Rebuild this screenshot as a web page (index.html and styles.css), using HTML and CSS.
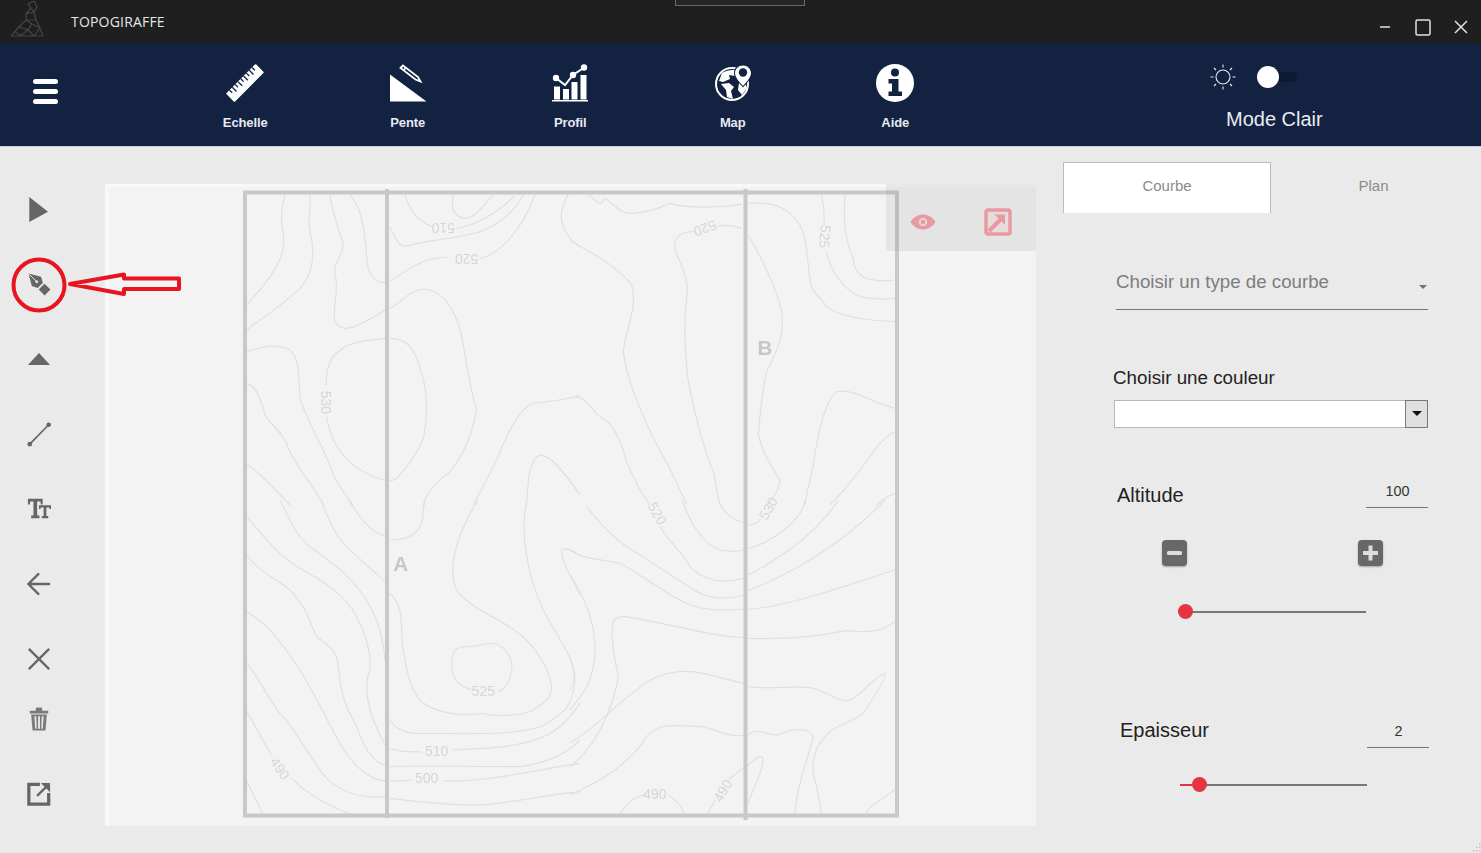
FILE: index.html
```html
<!DOCTYPE html>
<html lang="fr">
<head>
<meta charset="utf-8">
<title>TOPOGIRAFFE</title>
<link rel="stylesheet" href="styles.css">
</head>
<body>
<div class="app">
  <header class="titlebar">
    <svg class="logo" viewBox="0 0 36 38" aria-hidden="true">
      <path class="logo-line" d="M24 1 L18 4 L21 8 L16 14 L16 20 L9 27 L1 36 M24 1 L27 7 L24 12 L26 20 L30 28 L33 36 M16 20 L22 24 L18 30 L24 36 M9 27 L18 30 L10 36 M22 24 L30 28 L24 36 M1 36 H33 M21 8 L24 12 L16 14 M16 14 L24 12 M16 20 L26 20 M5 32 L12 36"/>
    </svg>
    <span class="app-name">TOPOGIRAFFE</span>
    <div class="drag-tab"></div>
    <div class="win-controls">
      <svg class="win-ico win-min" viewBox="0 0 11 2"><path d="M0 1H10"/></svg>
      <svg class="win-ico win-max" viewBox="0 0 16 17"><rect x="1" y="1" width="14" height="15" rx="1.5"/></svg>
      <svg class="win-ico win-close" viewBox="0 0 14 14"><path d="M1 1L13 13M13 1L1 13"/></svg>
    </div>
  </header>

  <nav class="navbar">
    <svg class="burger" viewBox="0 0 25 25" aria-hidden="true">
      <rect x="0" y="0" width="25" height="5" rx="2.5"/>
      <rect x="0" y="10" width="25" height="5" rx="2.5"/>
      <rect x="0" y="20" width="25" height="5" rx="2.5"/>
    </svg>
    <div class="nav-items">
      <div class="nav-item">
        <svg class="nav-ico" viewBox="0 0 38 38" aria-hidden="true">
          <g transform="rotate(-45 19 19)">
            <rect x="-2" y="13" width="42" height="12" rx="1" class="ico-fill"/>
            <path class="ico-cut" d="M3 13v4M7 13v6M11 13v4M15 13v6M19 13v4M23 13v6M27 13v4M31 13v6M35 13v4"/>
          </g>
        </svg>
        <span>Echelle</span>
      </div>
      <div class="nav-item">
        <svg class="nav-ico" viewBox="0 0 38 38" aria-hidden="true">
          <path class="ico-fill" d="M1 10.5V37.5H37.5Z"/>
          <path class="ico-outline" d="M11.5 4L14 1.5L29 13L31.500 17.500L26.500 15.500Z"/>
          <path class="ico-outline" d="M14.500 6.500L16.500 4"/>
        </svg>
        <span>Pente</span>
      </div>
      <div class="nav-item">
        <svg class="nav-ico" viewBox="0 0 38 38" aria-hidden="true">
          <path class="ico-fill" d="M3 22.500h6v13h-6zM12 25h6v10.500h-6zM20.500 18h6v17.500h-6zM29.500 11h6v24.500h-6zM1 36h36v1.500H1z"/>
          <path class="ico-stroke" d="M5 14L14 21L22 11L34 3"/>
          <circle class="ico-fill" cx="5" cy="14" r="3.200"/>
          <circle class="ico-fill" cx="22" cy="11" r="3.200"/>
          <circle class="ico-fill" cx="33" cy="3.500" r="3.200"/>
        </svg>
        <span>Profil</span>
      </div>
      <div class="nav-item">
        <svg class="nav-ico" viewBox="0 0 38 38" aria-hidden="true">
          <circle class="ico-outline-thick" cx="18" cy="20" r="16"/>
          <path class="ico-fill" d="M8 9C13 6 20 5 23 7L21 12L15 11L16 15L9 18L5 17ZM7 20L15 19L20 23L17 27L19 35L13 33L12 26ZM25 19L31 19L33 24L28 31L24 26Z"/>
          <path class="ico-navy" d="M29 0.500C23.500 0.500 20 4.500 20 9C20 14 26 20 29 23.500C32 20 38 14 38 9C38 4.500 34.500 0.500 29 0.500Z"/>
          <path class="ico-fill" d="M29 1.500C24.500 1.500 21 5 21 9C21 13.500 26 18.500 29 22C32 18.500 37 13.500 37 9C37 5 33.500 1.500 29 1.500Z"/>
          <circle class="ico-navy" cx="29" cy="8.500" r="4.200"/>
        </svg>
        <span>Map</span>
      </div>
      <div class="nav-item">
        <svg class="nav-ico" viewBox="0 0 38 38" aria-hidden="true">
          <circle class="ico-fill" cx="19" cy="19" r="19"/>
          <circle class="ico-navy" cx="19" cy="8.500" r="4"/>
          <path class="ico-navy" d="M12.500 15H22.500V27.500H26V32H12.500V27.500H16V19.500H12.500Z"/>
        </svg>
        <span>Aide</span>
      </div>
    </div>
    <div class="mode">
      <div class="mode-switch">
        <svg class="sun" viewBox="0 0 26 26" aria-hidden="true">
          <circle cx="13" cy="13" r="7"/>
          <path d="M13 0.500V3.500M13 22.500V25.500M0.500 13H3.500M22.500 13H25.500M4 4L6 6M20 20L22 22M22 4L20 6M6 20L4 22"/>
        </svg>
        <div class="toggle"><div class="knob"></div></div>
      </div>
      <div class="mode-label">Mode Clair</div>
    </div>
  </nav>

  <main class="workspace">
    <aside class="tools">
      <svg class="tool" viewBox="0 0 24 26"><path class="t-fill" d="M1.500 0L21.800 16L1.500 27Z"/></svg>
      <svg class="tool" viewBox="0 0 24 26">
        <g transform="rotate(-45 12 13)">
          <path class="t-fill" d="M12 -3L19 9L16 15H8L5 9ZM7.500 17H16.500V26H7.500Z"/>
          <path class="t-cut" d="M12 -2V9"/>
          <circle class="t-cut-fill" cx="12" cy="9.500" r="1.500"/>
        </g>
      </svg>
      <svg class="tool" viewBox="0 0 24 26"><path class="t-fill" d="M0 19.500L12 6.500L24 19.500Z"/></svg>
      <svg class="tool" viewBox="0 0 24 26">
        <path class="t-line" d="M2 24L22.500 3"/>
        <circle class="t-fill" cx="2" cy="24" r="2.500"/>
        <circle class="t-fill" cx="22.500" cy="3" r="2.500"/>
      </svg>
      <svg class="tool" viewBox="0 0 26 26">
        <path class="t-fill" d="M1 2H17V8H15L14.500 5H11V20H13.500V23H4.500V20H7V5H3.500L3 8H1Z"/>
        <path class="t-fill" d="M13 9H26V13H24.500L24 11.500H21V20.500H23V23H16V20.500H18V11.500H15L14.500 13H13Z"/>
      </svg>
      <svg class="tool" viewBox="0 0 26 26"><path class="t-line t-thick" d="M25 13H2M13 1.500L1.500 13L13 24.500"/></svg>
      <svg class="tool" viewBox="0 0 26 26"><path class="t-line t-thick" d="M2 2L24 24M24 2L2 24"/></svg>
      <svg class="tool tool-trash" viewBox="0 0 24 26">
        <path class="t-soft" d="M2 4H8.500V2C8.500 1 9.500 .5 10.500 .5H13.500C14.500 .5 15.500 1 15.500 2V4H22V7H2ZM3.500 8H20.500L19 25.500H5ZM7 10L8 23.500H9.500L9 10ZM11 10V23.500H13V10ZM15 10L14.500 23.500H16L17 10Z"/>
      </svg>
      <svg class="tool" viewBox="0 0 26 26">
        <path class="t-line t-heavy" d="M14 2.500H2V24H23.500V12"/>
        <path class="t-line t-thick" d="M11 15L21 5"/>
        <path class="t-fill" d="M15 1H25V11Z"/>
      </svg>
    </aside>

    <section class="canvas">
      <svg class="map" viewBox="105 184 931 642" aria-label="Carte topographique">
        <g transform="translate(100 175) scale(.3333)" class="contours">
          <path d="M555 60C545 100 540 130 550 180C558 230 540 280 440 390"/>
          <path d="M630 60C635 100 620 130 630 170C645 230 645 290 600 340C560 380 500 420 440 465"/>
          <path d="M690 60C695 110 720 170 730 210C725 250 700 260 705 300C720 340 695 400 705 440C725 475 760 465 855 405"/>
          <path d="M870 400C900 385 930 345 970 342C1030 345 1075 410 1090 510C1100 570 1110 640 1130 705C1120 760 1100 830 1050 890C1010 920 980 950 970 990"/>
          <path d="M750 60C780 90 795 150 800 250C805 300 825 325 855 322"/>
          <path d="M870 318C900 305 950 250 1040 246"/>
          <path d="M1140 250C1190 240 1260 180 1305 60"/>
          <path d="M870 155C890 200 900 220 925 212C980 195 1080 190 1140 170C1200 150 1250 100 1270 60"/>
          <path d="M915 60C930 110 960 140 995 155"/>
          <path d="M1070 160C1120 155 1200 110 1245 60"/>
          <path d="M1060 60C1050 110 1070 130 1100 130C1130 125 1150 90 1180 60"/>
          <path d="M1440 215C1400 190 1380 150 1385 110C1390 90 1395 70 1405 60"/>
          <path d="M440 530C480 515 540 505 570 525C600 550 595 610 600 670C620 740 680 830 700 900C720 940 740 965 760 990"/>
          <path d="M440 625C470 630 485 680 495 720C510 750 550 770 565 820C590 880 640 930 670 990"/>
          <path d="M440 868C480 890 530 950 570 990"/>
          <path d="M678 630C680 560 700 525 760 505C800 495 855 490 855 490"/>
          <path d="M870 490C920 490 945 520 960 580C985 650 985 720 970 790C950 840 920 880 890 910C875 920 870 915 870 915"/>
          <path d="M680 725C690 810 750 890 855 915"/>
          <path d="M1440 660C1400 675 1340 680 1300 685C1260 700 1230 760 1200 830C1170 900 1140 950 1120 990"/>
          <path d="M1440 960C1400 900 1350 840 1320 840C1290 850 1285 900 1280 990"/>
          <text class="map-num" transform="translate(1030 160) rotate(180)">510</text>
          <text class="map-num" transform="translate(1100 252) rotate(180)">520</text>
          <text class="map-num" transform="translate(677 682) rotate(90)">530</text>
        </g>
        <g transform="translate(570 175) scale(.3333)" class="contours">
          <path d="M0 195C50 230 130 260 185 330C205 390 165 470 160 530C170 610 200 680 250 790C290 860 320 920 350 990"/>
          <path d="M55 60C80 75 90 100 105 70C130 85 150 115 180 115C220 115 270 100 300 85C350 100 440 100 515 88"/>
          <path d="M535 85C600 80 650 90 690 150C715 200 710 260 720 310C720 345 740 360 760 380C770 410 840 435 975 440"/>
          <path d="M440 155C470 145 500 155 515 160"/>
          <path d="M535 180C570 240 620 340 635 410C645 480 620 530 590 590C575 650 570 720 565 780C580 850 620 890 630 920C625 950 610 970 590 990"/>
          <path d="M370 170C330 170 310 190 315 220C330 270 360 310 350 370C340 450 345 540 355 620C370 700 400 820 430 890C440 930 440 960 450 990"/>
          <path d="M755 60C760 90 765 120 762 150"/>
          <path d="M770 230C780 290 820 340 870 365C910 375 950 372 975 370"/>
          <path d="M825 60C820 130 825 200 850 250C850 300 890 325 975 315"/>
          <path d="M0 670C40 650 60 700 90 725C130 745 150 790 170 860C190 910 210 950 240 990"/>
          <path d="M975 700C900 680 850 640 800 650C770 670 745 760 730 870C720 920 710 950 705 990"/>
          <path d="M975 770C930 790 900 850 850 910C820 950 800 970 780 990"/>
          <path d="M975 955C950 965 930 980 920 990"/>
          <text class="map-num" transform="translate(405 160) rotate(160)">520</text>
          <text class="map-num" transform="translate(765 185) rotate(95)">525</text>
          <text class="map-letter" x="585" y="517">B</text>
        </g>
        <g transform="translate(100 500) scale(.3333)" class="contours">
          <path d="M540 0C570 60 590 110 630 140C700 190 770 240 810 320C840 370 850 420 855 480"/>
          <path d="M665 0C680 50 700 100 740 140C780 180 830 220 855 245"/>
          <path d="M745 0C780 50 810 100 855 108"/>
          <path d="M440 50C490 110 540 170 600 205C680 250 740 290 770 350C800 410 815 460 810 510C785 570 810 650 855 735"/>
          <path d="M440 165C470 210 520 230 570 270C620 320 630 370 650 410C690 440 710 450 715 500C720 560 730 610 770 680C790 740 820 790 855 795"/>
          <path d="M440 335C500 370 540 420 600 510C650 590 680 660 720 730C760 800 810 840 855 843"/>
          <path d="M440 490C470 520 500 590 540 640C600 700 640 800 690 845C740 885 800 895 855 890"/>
          <path d="M870 895C950 905 1050 915 1130 915C1200 915 1300 890 1440 875"/>
          <path d="M440 635C470 680 490 730 515 765"/>
          <path d="M575 835C620 880 690 920 760 945"/>
          <path d="M440 845C460 880 475 915 490 945"/>
          <path d="M870 120C930 120 970 100 970 30L975 0"/>
          <path d="M870 280C900 310 905 340 905 400C910 480 930 570 960 600C1000 640 1080 650 1150 640C1180 650 1260 650 1300 630C1340 600 1350 600 1355 560C1350 510 1310 440 1250 395C1190 350 1100 320 1070 270C1040 210 1070 100 1135 0"/>
          <path d="M1280 0C1260 100 1280 220 1330 330C1370 410 1425 470 1425 540C1420 620 1390 640 1340 670C1280 710 1100 700 950 700C910 700 880 680 870 660"/>
          <path d="M870 745C900 755 930 757 965 755"/>
          <path d="M1060 750C1150 745 1250 745 1330 710C1380 690 1420 640 1440 610"/>
          <path d="M870 800C960 795 1100 800 1260 800C1340 790 1400 760 1440 720"/>
          <path d="M870 843C890 843 920 843 935 840"/>
          <path d="M1030 842C1150 850 1300 810 1440 790"/>
          <path d="M1115 570C1080 560 1055 540 1055 490C1055 450 1070 440 1100 440C1140 440 1160 425 1190 432C1220 445 1240 480 1235 510C1230 550 1210 570 1195 575"/>
          <path d="M1385 150C1400 140 1420 155 1440 165M1385 150C1385 190 1420 240 1440 285"/>
          <text class="map-num" transform="translate(540 805) rotate(55)">490</text>
          <text class="map-num" x="1010" y="752">510</text>
          <text class="map-num" x="980" y="835">500</text>
          <text class="map-num" x="1150" y="573">525</text>
          <text class="map-letter" x="902" y="190">A</text>
        </g>
        <g transform="translate(570 500) scale(.3333)" class="contours">
          <path d="M0 150C40 180 110 180 150 190C210 220 280 280 360 315C420 335 480 330 520 328"/>
          <path d="M535 328C650 320 820 260 975 210"/>
          <path d="M50 20C90 70 130 120 210 165C280 210 340 250 390 280C440 300 490 295 520 285"/>
          <path d="M535 225C640 170 740 100 805 0"/>
          <path d="M535 272C690 210 830 120 945 0"/>
          <path d="M270 80C300 130 340 160 360 200C400 240 450 255 520 235"/>
          <path d="M335 0C360 60 390 130 450 150C480 155 505 155 520 150"/>
          <path d="M535 145C600 130 700 60 705 0"/>
          <path d="M445 0C460 40 490 60 520 68"/>
          <path d="M535 75C550 75 565 65 572 58"/>
          <path d="M0 225C50 300 90 400 70 500C60 560 30 590 0 630"/>
          <path d="M0 480C15 510 20 540 0 570"/>
          <path d="M130 370C130 355 150 345 180 352C300 370 420 410 520 412"/>
          <path d="M535 415C650 420 740 410 830 392C900 400 930 395 975 365"/>
          <path d="M130 370C120 400 130 460 145 530C130 620 80 740 0 800"/>
          <path d="M0 730C80 680 130 620 200 570C250 520 330 505 400 520C450 530 490 545 520 550"/>
          <path d="M535 560C600 570 680 555 730 565C770 575 810 610 840 600C870 590 900 540 945 520C950 530 920 580 880 640C850 665 810 670 780 695C740 730 725 770 730 820C740 860 750 900 755 945"/>
          <path d="M0 885C100 840 180 790 230 710C260 670 300 675 400 680C440 690 470 710 520 707"/>
          <path d="M535 705C560 680 590 705 620 705C660 690 710 675 730 710C720 760 680 850 675 945"/>
          <path d="M150 940C170 910 200 890 225 882"/>
          <path d="M295 885C320 900 335 920 345 945"/>
          <path d="M410 945C420 925 430 915 435 900"/>
          <path d="M475 840C500 815 530 800 560 775C580 760 585 780 570 820C555 860 540 890 535 910"/>
          <path d="M890 945C885 920 940 900 975 868"/>
          <text class="map-num" transform="translate(262 40) rotate(60)">520</text>
          <text class="map-num" transform="translate(595 25) rotate(-60)">530</text>
          <text class="map-num" x="255" y="882">490</text>
          <text class="map-num" transform="translate(458 872) rotate(-60)">490</text>
        </g>
        <rect class="frame" x="245" y="192.500" width="652" height="623"/>
        <path class="frame" d="M387 189V818M745.500 189V820"/>
      </svg>
      <div class="canvas-tools">
        <svg class="eye" viewBox="0 0 26 16" aria-hidden="true">
          <path d="M0.500 8C4 2.500 8.500 0.500 13 0.500C17.500 0.500 22 2.500 25.500 8C22 13.500 17.500 15.500 13 15.500C8.500 15.500 4 13.500 0.500 8Z"/>
          <circle class="eye-hole" cx="13" cy="8" r="4.200"/>
          <circle cx="13" cy="8" r="2.200"/>
        </svg>
        <svg class="resize" viewBox="0 0 28 28" aria-hidden="true">
          <rect class="resize-box" x="2" y="2" width="24" height="24" rx="2"/>
          <path d="M21 6.500V17L17.500 13.500L6.500 24.500L3.500 21.500L14.500 10.500L10.500 6.500Z"/>
        </svg>
      </div>
    </section>

    <aside class="panel">
      <div class="tabs">
        <div class="tab tab-active">Courbe</div>
        <div class="tab">Plan</div>
      </div>
      <div class="form">
        <div class="type-select">
          <span>Choisir un type de courbe</span>
          <span class="caret"></span>
        </div>
        <div class="color-label">Choisir une couleur</div>
        <div class="color-select">
          <div class="color-arrow"><span class="caret caret-dark"></span></div>
        </div>
        <div class="value-row">
          <span class="value-label">Altitude</span>
          <span class="value-box">100</span>
        </div>
        <div class="steppers">
          <svg class="stepper" viewBox="0 0 25 26"><rect x="5" y="11" width="15" height="4" rx="1.500"/></svg>
          <svg class="stepper" viewBox="0 0 25 26"><path d="M5 11H10.500V5.500H14.500V11H20V15H14.500V20.500H10.500V15H5Z"/></svg>
        </div>
        <div class="slider slider-alt">
          <div class="slider-track"></div>
          <div class="slider-thumb" style="left:0"></div>
        </div>
        <div class="value-row value-row-thick">
          <span class="value-label">Epaisseur</span>
          <span class="value-box">2</span>
        </div>
        <div class="slider slider-thick">
          <div class="slider-track"><div class="slider-fill" style="width:20px"></div></div>
          <div class="slider-thumb" style="left:12px"></div>
        </div>
      </div>
      <svg class="grip" viewBox="0 0 11 11" aria-hidden="true">
        <path d="M9 1h1.500v1.500H9zM6 4.500h1.500V6H6zM9 4.500h1.500V6H9zM3 8h1.500v1.500H3zM6 8h1.500v1.500H6zM9 8h1.500v1.500H9z"/>
      </svg>
    </aside>

    <svg class="annotation" viewBox="0 0 190 80" aria-hidden="true">
      <circle cx="39" cy="40" r="25.500"/>
      <path d="M70 39L124 29.500V33.500H179V44H124V49Z"/>
    </svg>
  </main>
</div>
</body>
</html>
```

FILE: styles.css
```css
* { box-sizing: border-box; }
html, body { margin: 0; height: 100%; overflow: hidden; }
body { font-family: "Liberation Sans", Arial, sans-serif; background: #eaeaea; }
.app { width: 1481px; height: 853px; display: flex; flex-direction: column; }

/* Title bar */
.titlebar { position: relative; height: 43px; background: #1f1f1f; display: flex; align-items: center; padding-left: 10px; flex: none; }
.logo { width: 36px; height: 38px; margin-top: -6px; filter: blur(.4px); }
.logo-line { fill: none; stroke: #454545; stroke-width: 1.200; }
.app-name { margin-left: 25px; margin-top: -1px; font-family: "Open Sans", sans-serif; font-size: 14px; letter-spacing: .19px; color: #e6e6e6; }
.drag-tab { position: absolute; left: 675px; top: -2px; width: 130px; height: 8px; background: #262626; border: 1px solid #6a6a6a; }
.win-controls { margin-left: auto; display: flex; align-items: center; height: 100%; padding-right: 13px; padding-top: 11px; }
.win-ico { display: block; fill: none; stroke: #e2e2e2; stroke-width: 1.500; }
.win-min { width: 11px; height: 2px; }
.win-max { width: 16px; height: 17px; margin-left: 24px; }
.win-close { width: 14px; height: 14px; margin-left: 23px; }

/* Navigation */
.navbar { height: 104px; background: #132240; border-bottom: 1px solid #c9ccd4; display: flex; flex: none; position: relative; }
.burger { width: 25px; height: 25px; margin: 36px 0 0 33px; fill: #fff; flex: none; }
.nav-items { display: flex; margin-left: 106px; }
.nav-item { width: 162.500px; display: flex; flex-direction: column; align-items: center; padding-top: 21px; color: #e8eaf0; font-size: 13px; font-weight: 700; letter-spacing: -.1px; }
.nav-ico { width: 38px; height: 38px; display: block; margin-bottom: 13px; filter: blur(.3px); }
.nav-item span { line-height: 16px; }
.ico-fill { fill: #fff; }
.ico-cut { fill: none; stroke: #132240; stroke-width: 1.300; }
.ico-navy { fill: #132240; }
.ico-outline { fill: none; stroke: #fff; stroke-width: 1.800; }
.ico-outline-thick { fill: none; stroke: #fff; stroke-width: 2; }
.ico-stroke { fill: none; stroke: #fff; stroke-width: 2; }
.mode { width: 240px; margin-left: auto; margin-right: 87px; display: flex; flex-direction: column; align-items: center; }
.mode-switch { display: flex; align-items: center; width: 100%; padding: 21px 0 0 56px; }
.sun { width: 26px; height: 26px; fill: none; stroke: #e8eaf0; stroke-width: 1.100; }
.toggle { position: relative; width: 40px; height: 10px; margin-left: 21px; background: #0e1a33; border-radius: 5px; }
.knob { position: absolute; left: 0; top: -6px; width: 22px; height: 22px; border-radius: 50%; background: #fff; }
.mode-label { margin-top: 17px; width: 100%; padding-left: 72px; font-size: 20px; line-height: 24px; color: #e9ebf0; }

/* Workspace */
.workspace { position: relative; flex: 1; display: flex; align-items: flex-start; background: #eaeaea; }
.tools { width: 105px; flex: none; display: flex; flex-direction: column; align-items: center; gap: 51px; padding: 50px 27px 0 0; }
.tool { width: 24px; height: 24px; flex: none; overflow: visible; filter: blur(.55px); }
.t-fill { fill: #666; }
.t-soft { fill: #7b7b7b; }
.t-cut { fill: none; stroke: #eaeaea; stroke-width: 1; }
.t-cut-fill { fill: #eaeaea; }
.t-line { fill: none; stroke: #666; stroke-width: 1.800; }
.t-thick { stroke-width: 2.500; }
.t-heavy { stroke-width: 3.500; }
.tool-trash { margin-top: -15px; }

/* Canvas */
.canvas { position: relative; width: 931px; height: 642px; margin-top: 37px; background: #f3f3f3; box-shadow: inset 4px 3px 0 #f8f8f8; flex: none; }
.map { display: block; width: 100%; height: 100%; filter: blur(.5px); }
.contours path { fill: none; stroke: #e0e0e0; stroke-width: 3.600; }
.map-num { font-family: "Liberation Sans", sans-serif; font-size: 42px; fill: #d6d6d6; text-anchor: middle; dominant-baseline: central; }
.map-letter { font-family: "Liberation Sans", sans-serif; font-size: 62px; font-weight: 700; fill: #c8c8c8; text-anchor: middle; dominant-baseline: central; }
.frame { fill: none; stroke: #c8c8c8; stroke-width: 4; }
.canvas-tools { position: absolute; right: 0; top: 0; width: 150px; height: 67px; background: rgba(120, 120, 120, .12); display: flex; align-items: center; padding: 9px 0 0 24px; }
.eye { width: 26px; height: 16px; fill: #e79aa0; filter: blur(.3px); }
.eye-hole { fill: #e8d4d6; }
.resize { width: 28px; height: 28px; margin-left: 48px; fill: #e79aa0; filter: blur(.4px); }
.resize-box { fill: #e6dcdc; stroke: #e79aa0; stroke-width: 3.500; }

/* Right panel */
.panel { flex: 1; position: relative; align-self: stretch; padding: 15px 0 0 27px; }
.tabs { display: flex; height: 51px; font-size: 15px; color: #8a8a8a; }
.tab { width: 205px; text-align: center; line-height: 48px; }
.tab-active { width: 208px; background: #fff; border: 1px solid #bdbdbd; border-bottom: 0; line-height: 46px; }
.form { width: 314px; margin-left: 51px; display: flex; flex-direction: column; }
.type-select { height: 41px; margin: 56px 0 0 2px; padding: 2px 1px 0 0; border-bottom: 1px solid #777; display: flex; justify-content: space-between; font-size: 18.700px; line-height: 22px; color: #7d7d7d; }
.caret { display: block; width: 0; height: 0; border: 4px solid transparent; border-top-color: #707070; border-bottom: 0; margin-top: 14px; }
.color-label { margin: 57px 0 0 -1px; font-size: 18.800px; line-height: 22px; color: #222; }
.color-select { height: 28px; margin-top: 11px; background: #fff; border: 1px solid #b8b8b8; display: flex; justify-content: flex-end; }
.color-arrow { width: 23px; margin: -1px -1px -1px 0; background: #e0e0e0; border: 1px solid #777; display: flex; justify-content: center; }
.caret-dark { border-width: 5px 5px 0; border-top-color: #111; margin-top: 10px; }
.value-row { height: 28px; margin-top: 52px; margin-left: 3px; display: flex; justify-content: space-between; }
.value-label { font-size: 20px; line-height: 24px; margin-top: 3px; color: #222; }
.value-box { width: 62px; height: 28px; padding-left: 1px; border-bottom: 1px solid #777; text-align: center; font-size: 14.400px; line-height: 22px; color: #333; }
.value-row-thick { margin: 101px -1px 0 6px; }
.value-row-thick .value-label { margin-top: -2px; }
.steppers { display: flex; justify-content: space-between; margin: 32px 45px 0 48px; }
.stepper { width: 25px; height: 26px; background: #686868; border-radius: 4px; box-shadow: 0 1px 2px rgba(0, 0, 0, .3); fill: #dcdcdc; }
.slider { position: relative; height: 15px; display: flex; align-items: center; }
.slider-alt { margin: 38px 0 0 64px; width: 188px; }
.slider-thick { margin: 29px 0 0 65.500px; width: 187.500px; }
.slider-track { width: 100%; height: 2px; background: #777; }
.slider-fill { height: 100%; background: #e53442; }
.slider-thumb { position: absolute; top: 0; width: 15px; height: 15px; border-radius: 50%; background: #e53442; }
.grip { position: absolute; right: 0; bottom: 0; width: 11px; height: 11px; fill: #c4c4c4; }

/* Red hand-drawn annotation */
.annotation { position: absolute; left: 0; top: 98px; width: 190px; height: 80px; fill: none; stroke: #e8141f; stroke-width: 4; stroke-linejoin: round; }
```
